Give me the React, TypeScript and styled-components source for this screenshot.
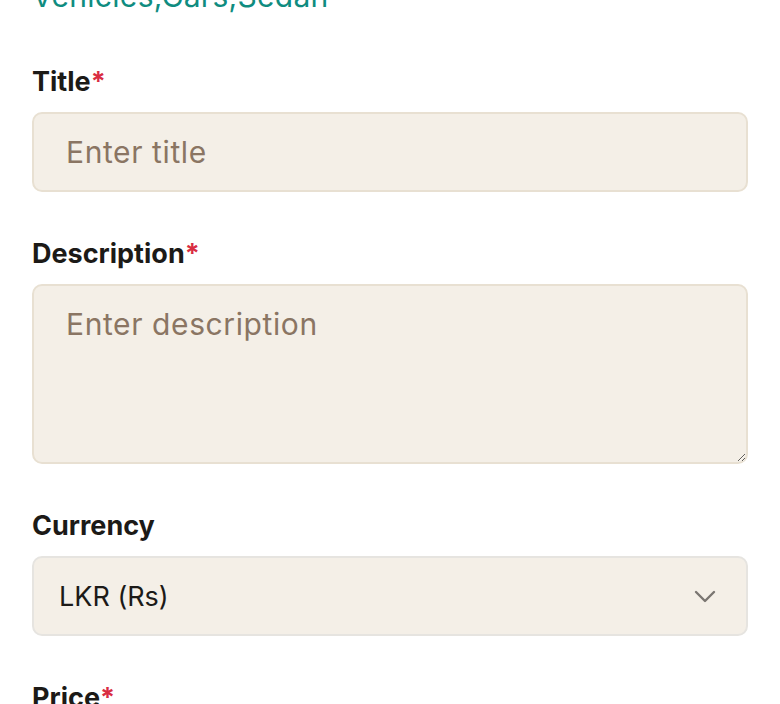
import React from 'react';
import styled, { createGlobalStyle } from 'styled-components';

const GlobalStyle = createGlobalStyle`
  html, body {
    margin: 0;
    padding: 0;
    background: #ffffff;
    overflow: hidden;
  }

  body {
    font-family: Inter, "Liberation Sans", Arial, sans-serif;
    color: #1a1a1a;
  }

  * {
    box-sizing: border-box;
  }
`;

const FormPage = styled.div`
  display: flex;
  flex-direction: column;
  padding: 0 32px;
  height: 704px;
  overflow: hidden;
`;

const CategoryPath = styled.div`
  margin-top: -22px;
  margin-bottom: 6px;
  font-size: 30px;
  line-height: 36px;
  letter-spacing: 0.3px;
  color: #0f8c80;
`;

const Field = styled.div`
  display: flex;
  flex-direction: column;
  margin-top: 46px;
`;

const Label = styled.label`
  display: block;
  margin-bottom: 14px;
  font-size: 27px;
  line-height: 32px;
  font-weight: 700;
  color: #1c1a17;
`;

const Required = styled.span`
  color: #d92d42;
`;

const fieldBase = `
  width: 100%;
  border-radius: 10px;
  background: #f4efe7;
  font-family: Inter, "Liberation Sans", Arial, sans-serif;
  color: #1c1a17;
  outline: none;
`;

const placeholderText = `
  &::placeholder {
    color: #8a7563;
    letter-spacing: 0.6px;
  }
`;

const TextInput = styled.input`
  ${fieldBase}
  height: 80px;
  padding: 0 32px;
  border: 2px solid #e8e0d2;
  font-size: 30px;
  ${placeholderText}
`;

const TextArea = styled.textarea`
  ${fieldBase}
  display: block;
  height: 180px;
  padding: 17px 32px;
  border: 2px solid #e8e0d2;
  font-size: 30px;
  line-height: 1.4;
  resize: vertical;
  ${placeholderText}
`;

const SelectBox = styled.div`
  ${fieldBase}
  display: flex;
  align-items: center;
  justify-content: space-between;
  height: 80px;
  padding: 0 30px 0 25px;
  border: 2px solid #e6e4e0;
  cursor: pointer;
`;

const SelectValue = styled.span`
  font-size: 27px;
`;

const Chevron = styled.svg`
  width: 22px;
  height: 14px;
  color: #7a7671;
`;

const App: React.FC = () => {
  return (
    <>
      <GlobalStyle />
      <FormPage>
        <CategoryPath>Vehicles,Cars,Sedan</CategoryPath>

        <Field>
          <Label>
            Title<Required>*</Required>
          </Label>
          <TextInput placeholder="Enter title" />
        </Field>

        <Field>
          <Label>
            Description<Required>*</Required>
          </Label>
          <TextArea placeholder="Enter description" />
        </Field>

        <Field>
          <Label>Currency</Label>
          <SelectBox>
            <SelectValue>LKR (Rs)</SelectValue>
            <Chevron viewBox="0 0 22 14" fill="none" stroke="currentColor" strokeWidth="2.4" strokeLinecap="round" strokeLinejoin="round">
              <path d="M2 3l9 9 9-9" />
            </Chevron>
          </SelectBox>
        </Field>

        <Field>
          <Label>
            Price<Required>*</Required>
          </Label>
        </Field>
      </FormPage>
    </>
  );
};

export default App;
